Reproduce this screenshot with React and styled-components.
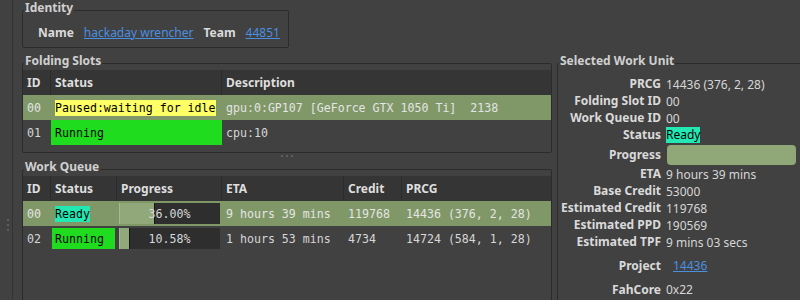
import React from 'react';
import styled, { createGlobalStyle } from 'styled-components';

const COLORS = {
  bg: '#414141',
  border: '#2b2b2b',
  header: '#353535',
  text: '#d6d6d6',
  label: '#dadada',
  selected: '#809868',
  chunk: '#91a97a',
  trough: '#2e2e2e',
  link: '#4a8fe0',
  paused: '#ffff66',
  running: '#1fdc1f',
  ready: '#22e9b4',
};

const SANS = `"Noto Sans", "Open Sans", sans-serif`;
const MONO = `"DejaVu Sans Mono", "Liberation Mono", monospace`;

const SLOT_COLS = '28px 171px 1fr';
const QUEUE_COLS = '28px 66px 105px 122px 58px 1fr';

const slots = [
  { id: '00', status: 'Paused:waiting for idle', color: COLORS.paused, desc: 'gpu:0:GP107 [GeForce GTX 1050 Ti]  2138', selected: true },
  { id: '01', status: 'Running', color: COLORS.running, desc: 'cpu:10' },
];

const queue = [
  { id: '00', status: 'Ready', color: COLORS.ready, progress: 36.0, eta: '9 hours 39 mins', credit: '119768', prcg: '14436 (376, 2, 28)', selected: true },
  { id: '02', status: 'Running', color: COLORS.running, progress: 10.58, eta: '1 hours 53 mins', credit: '4734', prcg: '14724 (584, 1, 28)' },
];

const GlobalStyle = createGlobalStyle`
  html, body {
    margin: 0;
    padding: 0;
    background: ${COLORS.bg};
  }
  body {
    font-family: ${SANS};
    font-size: 12px;
    color: ${COLORS.text};
  }
`;

const App = () => (
  <>
    <GlobalStyle />
    <Window>
      <Gutter>
        <Dot />
        <Dot />
        <Dot />
      </Gutter>
      <Main>
        <Identity>
          <GroupTitle>Identity</GroupTitle>
          <IdentityRow>
            <Label>Name</Label>
            <Link>hackaday wrencher</Link>
            <Label>Team</Label>
            <Link>44851</Link>
          </IdentityRow>
        </Identity>

        <Lower>
          <LeftColumn>
            <Group>
              <GroupTitle>Folding Slots</GroupTitle>
              <Table $height={82}>
                <Row $cols={SLOT_COLS}>
                  <HeadCell>ID</HeadCell>
                  <HeadCell>Status</HeadCell>
                  <HeadCell>Description</HeadCell>
                </Row>
                {slots.map((s) => (
                  <Row key={s.id} $cols={SLOT_COLS} $selected={s.selected}>
                    <Cell>{s.id}</Cell>
                    {s.selected ? (
                      <Cell>
                        <Marked $color={s.color}>{s.status}</Marked>
                      </Cell>
                    ) : (
                      <Cell $pad="0">
                        <Badge $color={s.color} $indent={4}>{s.status}</Badge>
                      </Cell>
                    )}
                    <Cell>{s.desc}</Cell>
                  </Row>
                ))}
              </Table>
            </Group>

            <SplitHandle>
              <Dot />
              <Dot />
              <Dot />
            </SplitHandle>

            <Group $grow>
              <GroupTitle>Work Queue</GroupTitle>
              <Table $height={140}>
                <Row $cols={QUEUE_COLS}>
                  <HeadCell>ID</HeadCell>
                  <HeadCell>Status</HeadCell>
                  <HeadCell>Progress</HeadCell>
                  <HeadCell>ETA</HeadCell>
                  <HeadCell>Credit</HeadCell>
                  <HeadCell>PRCG</HeadCell>
                </Row>
                {queue.map((w) => (
                  <Row key={w.id} $cols={QUEUE_COLS} $selected={w.selected}>
                    <Cell>{w.id}</Cell>
                    {w.selected ? (
                      <Cell>
                        <Marked $color={w.color}>{w.status}</Marked>
                      </Cell>
                    ) : (
                      <Cell $pad="2px 2px 2px 1px">
                        <Badge $color={w.color} $indent={3}>{w.status}</Badge>
                      </Cell>
                    )}
                    <Cell $pad="2px 2px">
                      <ProgressBar>
                        <Chunk style={{ width: `${w.progress}%` }} />
                        <ProgressText>{w.progress.toFixed(2)}%</ProgressText>
                      </ProgressBar>
                    </Cell>
                    <Cell>{w.eta}</Cell>
                    <Cell>{w.credit}</Cell>
                    <Cell>{w.prcg}</Cell>
                  </Row>
                ))}
              </Table>
            </Group>
          </LeftColumn>

          <UnitGroup>
            <GroupTitle>Selected Work Unit</GroupTitle>
            <Form>
              <FormLabel>PRCG</FormLabel>
              <FormValue>14436 (376, 2, 28)</FormValue>
              <FormLabel>Folding Slot ID</FormLabel>
              <FormValue>00</FormValue>
              <FormLabel>Work Queue ID</FormLabel>
              <FormValue>00</FormValue>
              <FormLabel>Status</FormLabel>
              <FormValue>
                <StatusChip>Ready</StatusChip>
              </FormValue>
              <FormLabel $h={21}>Progress</FormLabel>
              <FormValue $h={21}>
                <UnitProgress />
              </FormValue>
              <FormLabel>ETA</FormLabel>
              <FormValue>9 hours 39 mins</FormValue>
              <FormLabel>Base Credit</FormLabel>
              <FormValue>53000</FormValue>
              <FormLabel>Estimated Credit</FormLabel>
              <FormValue>119768</FormValue>
              <FormLabel>Estimated PPD</FormLabel>
              <FormValue>190569</FormValue>
              <FormLabel>Estimated TPF</FormLabel>
              <FormValue>9 mins 03 secs</FormValue>
              <FormLabel $h={29}>Project</FormLabel>
              <FormValue $h={29}>
                <ProjectLink>14436</ProjectLink>
              </FormValue>
              <FormLabel $h={17}>FahCore</FormLabel>
              <FormValue $h={17}>0x22</FormValue>
            </Form>
          </UnitGroup>
        </Lower>
      </Main>
    </Window>
  </>
);

const Window = styled.div`
  display: flex;
  width: 800px;
  height: 300px;
  overflow: hidden;
  background: ${COLORS.bg};
`;

const Gutter = styled.div`
  flex: 0 0 auto;
  width: 5px;
  border-right: 1px solid #333333;
  display: flex;
  flex-direction: column;
  gap: 3px;
  padding: 219px 0 0 7px;
`;

const Dot = styled.span`
  display: block;
  width: 2px;
  height: 2px;
  background: #5e5e5e;
`;

const Main = styled.div`
  flex: 1;
  display: flex;
  flex-direction: column;
  padding-left: 9px;
  min-width: 0;
`;

const Group = styled.section`
  margin-top: 10px;
  border: 1px solid ${COLORS.border};
  border-radius: 2px;
  box-sizing: border-box;
  display: flex;
  flex-direction: column;
  flex: ${({ $grow }) => ($grow ? 1 : '0 0 auto')};
  min-height: 0;
`;

const GroupTitle = styled.h2`
  align-self: flex-start;
  margin: -11px 0 0 1px;
  padding: 0 1px;
  background: ${COLORS.bg};
  font: bold 12px/16px ${SANS};
  color: #d0d0d0;
`;

const Identity = styled(Group)`
  width: 267px;
  padding-bottom: 7px;
`;

const IdentityRow = styled.div`
  display: flex;
  align-items: center;
  gap: 10px;
  height: 16px;
  margin-top: 8px;
  padding: 0 8px 0 15px;
`;

const Label = styled.span`
  font-weight: bold;
  color: ${COLORS.label};
`;

const Link = styled.a`
  color: ${COLORS.link};
  text-decoration: underline;
  cursor: pointer;
`;

const Lower = styled.div`
  display: flex;
  gap: 5px;
  margin-top: 5px;
  height: 260px;
`;

const LeftColumn = styled.div`
  flex: 0 0 530px;
  display: flex;
  flex-direction: column;
`;

const SplitHandle = styled.div`
  height: 6px;
  display: flex;
  justify-content: center;
  align-items: center;
  gap: 3px;
`;

const Table = styled.div`
  margin-top: 1px;
  height: ${({ $height }) => $height}px;
  display: flex;
  flex-direction: column;
  font-family: ${MONO};
  font-size: 11.6px;
  overflow: hidden;
`;

const Row = styled.div`
  display: grid;
  grid-template-columns: ${({ $cols }) => $cols};
  height: 25px;
  flex: 0 0 25px;
  background: ${({ $selected }) => ($selected ? COLORS.selected : 'transparent')};
  color: ${({ $selected }) => ($selected ? '#e4e4e4' : COLORS.text)};
`;

const HeadCell = styled.div`
  display: flex;
  align-items: center;
  padding: 0 4px;
  background: ${COLORS.header};
  border-right: 1px solid ${COLORS.border};
  font: bold 12px ${SANS};
  color: #dedede;
  white-space: nowrap;

  &:last-child {
    border-right: none;
  }
`;

const Cell = styled.div`
  display: flex;
  align-items: center;
  padding: ${({ $pad }) => $pad ?? '0 4px'};
  white-space: pre;
  overflow: hidden;
  min-width: 0;
`;

const Marked = styled.span`
  background: ${({ $color }) => $color};
  color: #000;
  line-height: 16px;
`;

const Badge = styled.span`
  display: flex;
  align-items: center;
  flex: 1;
  align-self: stretch;
  padding-left: ${({ $indent }) => $indent}px;
  background: ${({ $color }) => $color};
  color: #000;
`;

const ProgressBar = styled.div`
  flex: 1;
  align-self: stretch;
  display: grid;
  background: ${COLORS.trough};
  color: #d8d8d8;

  & > * {
    grid-area: 1 / 1;
  }
`;

const Chunk = styled.div`
  justify-self: start;
  box-sizing: border-box;
  background: ${COLORS.chunk};
  border-left: 1px solid #a4ba8e;
  border-right: 1px solid #151515;
`;

const ProgressText = styled.span`
  align-self: center;
  justify-self: center;
`;

const UnitGroup = styled(Group)`
  flex: 0 0 250px;
`;

const Form = styled.div`
  display: grid;
  grid-template-columns: 100px 1fr;
  column-gap: 5px;
  row-gap: 1px;
  margin-top: 7px;
  padding-left: 3px;
`;

const FormLabel = styled.div`
  justify-self: end;
  height: ${({ $h }) => $h ?? 16}px;
  line-height: ${({ $h }) => $h ?? 16}px;
  font-weight: bold;
  color: ${COLORS.label};
  white-space: nowrap;
`;

const FormValue = styled.div`
  display: flex;
  align-items: center;
  height: ${({ $h }) => $h ?? 16}px;
  white-space: nowrap;
  color: ${COLORS.text};
`;

const StatusChip = styled.span`
  background: ${COLORS.ready};
  color: #000;
  line-height: 16px;
`;

const UnitProgress = styled.div`
  margin-left: 1px;
  width: 129px;
  height: 20px;
  border-radius: 4px;
  background: #90a878;
`;

const ProjectLink = styled(Link)`
  margin-left: 7px;
`;

export default App;
